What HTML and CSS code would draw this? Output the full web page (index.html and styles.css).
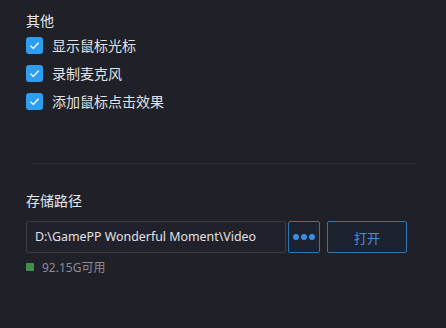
FILE: index.html
```html
<!DOCTYPE html>
<html lang="zh-CN">
<head>
    <meta charset="UTF-8">
    <meta name="viewport" content="width=device-width, initial-scale=1.0">
    <title>设置</title>
    <link rel="stylesheet" href="styles.css">
</head>
<body>
    <div class="panel">
        <div class="section">
            <div class="section-title">其他</div>
            <label class="check-row">
                <span class="check"><svg viewBox="0 0 17 17"><path d="M4.5 8.8 L7.3 11.4 L12.6 5.8"/></svg></span>
                <span>显示鼠标光标</span>
            </label>
            <label class="check-row">
                <span class="check"><svg viewBox="0 0 17 17"><path d="M4.5 8.8 L7.3 11.4 L12.6 5.8"/></svg></span>
                <span>录制麦克风</span>
            </label>
            <label class="check-row">
                <span class="check"><svg viewBox="0 0 17 17"><path d="M4.5 8.8 L7.3 11.4 L12.6 5.8"/></svg></span>
                <span>添加鼠标点击效果</span>
            </label>
        </div>

        <div class="divider"></div>

        <div class="section storage">
            <div class="section-title">存储路径</div>
            <div class="path-row">
                <div class="path-input">D:\GamePP Wonderful Moment\Video</div>
                <button class="btn btn-more"><span></span><span></span><span></span></button>
                <button class="btn btn-open">打开</button>
            </div>
            <div class="free-space">
                <span class="dot"></span>
                <span>92.15G可用</span>
            </div>
        </div>
    </div>
</body>
</html>
```

FILE: styles.css
```css
body {
    margin: 0;
    padding: 0;
    background-color: #1f2028;
    font-family: "Noto Sans", "Noto Sans CJK SC", sans-serif;
    color: #e2e3e6;
    font-size: 14px;
}

.panel {
    width: 446px;
    height: 328px;
    padding: 12px 0 0 26px;
    box-sizing: border-box;
}

.section-title {
    height: 18px;
    line-height: 18px;
    font-size: 14px;
    margin-bottom: 1px;
    color: #e6e7ea;
}

.check-row {
    display: flex;
    align-items: center;
    gap: 9px;
    height: 28px;
}

.check {
    width: 17px;
    height: 17px;
    border-radius: 3px;
    background-color: #2f9ef0;
    display: flex;
}

.check svg {
    width: 17px;
    height: 17px;
    fill: none;
    stroke: #fff;
    stroke-width: 1.3;
}

.divider {
    height: 1px;
    background-color: #2a2c35;
    margin: 48px 30px 0 6px;
}

.storage {
    margin-top: 28px;
}

.storage .section-title {
    margin-bottom: 11px;
}

.path-row {
    display: flex;
    gap: 2px;
    height: 32px;
}

.path-input {
    width: 260px;
    box-sizing: border-box;
    border: 1px solid #3b3d46;
    border-radius: 2px;
    padding-left: 8px;
    line-height: 30px;
    font-size: 12.4px;
    color: #e0e1e4;
    background-color: #20212a;
}

.btn {
    box-sizing: border-box;
    height: 32px;
    border: 1px solid #2b78b4;
    border-radius: 2px;
    background-color: #1d2230;
    font-family: inherit;
    padding: 0;
}

.btn-more {
    width: 32px;
    display: flex;
    align-items: center;
    justify-content: center;
    gap: 2px;
}

.btn-more span {
    width: 6px;
    height: 6px;
    border-radius: 50%;
    background-color: #3a8ee6;
}

.btn-open {
    width: 80px;
    margin-left: 5px;
    color: #4a8fd6;
    font-size: 13px;
}

.free-space {
    display: flex;
    align-items: center;
    gap: 8px;
    margin-top: 6px;
    color: #8b8d94;
    font-size: 12px;
    height: 16px;
}

.dot {
    width: 8px;
    height: 8px;
    background-color: #3f8f4f;
    border-radius: 1px;
}
```
